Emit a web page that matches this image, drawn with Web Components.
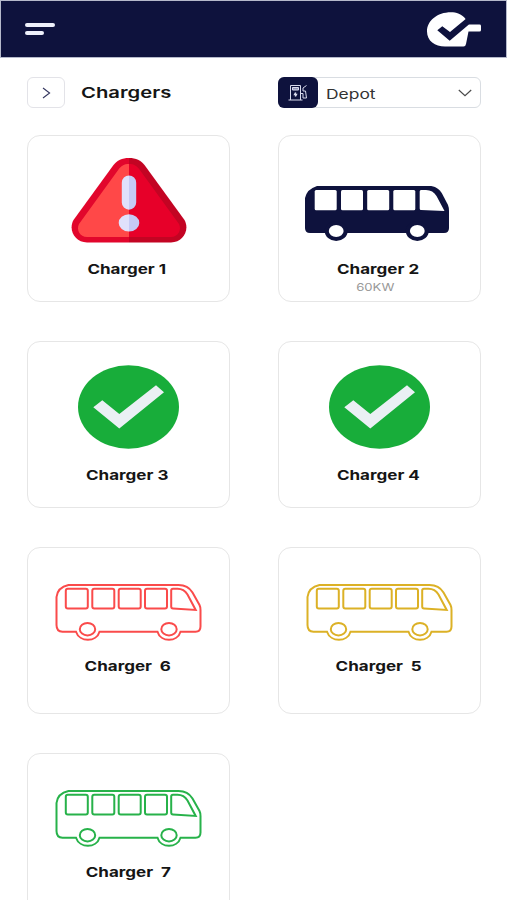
<!DOCTYPE html>
<html lang="en">
<head>
<meta charset="utf-8">
<meta name="viewport" content="width=device-width, initial-scale=1">
<title>Chargers</title>
<style>
  html, body {
    margin: 0;
    height: 900px;
    overflow: hidden;
    background: #fff;
    font-family: Inter, "Open Sans", sans-serif;
    color: #151515;
  }
</style>
</head>
<body>
<charger-page>
  <app-header slot="header"></app-header>
  <page-toolbar slot="toolbar">
    Chargers
    <depot-select slot="filter">Depot</depot-select>
  </page-toolbar>
  <charger-card><warning-icon slot="icon"></warning-icon>Charger 1</charger-card>
  <charger-card><bus-icon slot="icon" solid></bus-icon>Charger 2<span slot="power">60KW</span></charger-card>
  <charger-card><check-icon slot="icon"></check-icon>Charger 3</charger-card>
  <charger-card><check-icon slot="icon"></check-icon>Charger 4</charger-card>
  <charger-card compact><bus-icon slot="icon" style="color: #fa4b4b"></bus-icon>Charger 6</charger-card>
  <charger-card compact><bus-icon slot="icon" style="color: #dcb126"></bus-icon>Charger 5</charger-card>
  <charger-card compact><bus-icon slot="icon" style="color: #27b24a"></bus-icon>Charger 7</charger-card>
</charger-page>

<script>
class ChargerPage extends HTMLElement {
  constructor() {
    super()
    this.attachShadow({ mode: 'open' })
    this.shadowRoot.innerHTML = `
      <style>
        :host {
          display: block;
        }
        .grid {
          display: grid;
          grid-template-columns: 203px 203px;
          grid-auto-rows: 167px;
          gap: 39px 48px;
          padding: 27px 26px 0 27px;
        }
      </style>
      <slot name="header"></slot>
      <slot name="toolbar"></slot>
      <main class="grid"><slot></slot></main>
    `
  }
}

class AppHeader extends HTMLElement {
  constructor() {
    super()
    this.attachShadow({ mode: 'open' })
    this.shadowRoot.innerHTML = `
      <style>
        :host {
          display: flex;
          justify-content: space-between;
          align-items: center;
          box-sizing: border-box;
          height: 58px;
          padding: 0 25px 0 24px;
          background: #0e123d;
          border: 1px solid #b5b9cb;
        }
        .menu {
          display: flex;
          flex-direction: column;
          gap: 4.5px;
        }
        .menu i {
          width: 30px;
          height: 4px;
          border-radius: 2px;
          background: #eef0fb;
        }
        .menu i:last-child {
          width: 19px;
        }
        svg {
          display: block;
        }
      </style>
      <div class="menu"><i></i><i></i></div>
      <svg width="54" height="35" viewBox="0 0 54 35">
        <path fill="#fff" d="M39 7.5C35 2 29 .3 24 .3 10 .3 0 9 0 19.5 0 29 8 34.5 18 34.5H36.5Q38.5 34.5 39 32L41.5 19.5H52.5Q54 19.5 54 18V14Q54 12.6 52.5 12.6H41.5Z"/>
        <path fill="#0e123d" d="M10.3 18.3L15.3 14.3 23 20 39 6.8 45 9 41.3 13 22.7 28.7Z"/>
      </svg>
    `
  }
}

class PageToolbar extends HTMLElement {
  constructor() {
    super()
    this.attachShadow({ mode: 'open' })
    this.shadowRoot.innerHTML = `
      <style>
        :host {
          display: flex;
          align-items: center;
          height: 31px;
          padding: 19px 26px 0 27px;
        }
        .toggle {
          display: flex;
          align-items: center;
          justify-content: center;
          box-sizing: border-box;
          width: 38px;
          height: 31px;
          border: 1px solid #e3e3e8;
          border-radius: 6px;
        }
        h1 {
          margin: 0 0 0 16px;
          flex: 1;
          font-size: 15px;
          font-weight: 600;
          line-height: 20px;
          transform: scaleX(1.35);
          transform-origin: left;
        }
      </style>
      <div class="toggle">
        <svg width="9" height="12" viewBox="0 0 9 12" fill="none" stroke="#34365f" stroke-width="1.1"><path d="M1 1L7.6 6 1 11"/></svg>
      </div>
      <h1><slot></slot></h1>
      <slot name="filter"></slot>
    `
  }
}

class DepotSelect extends HTMLElement {
  constructor() {
    super()
    this.attachShadow({ mode: 'open' })
    this.shadowRoot.innerHTML = `
      <style>
        :host {
          display: flex;
          align-items: center;
          box-sizing: border-box;
          width: 203px;
          height: 31px;
          padding-right: 8px;
          border: 1px solid #d9dde2;
          border-radius: 6px;
          color: #333;
        }
        .tile {
          display: flex;
          align-items: center;
          justify-content: center;
          width: 40px;
          height: 31px;
          margin: -1px 8px -1px -1px;
          border-radius: 6px;
          background: #0e123d;
        }
        .value {
          flex: 1;
          font-size: 13.5px;
          line-height: 20px;
          transform: translateY(.5px) scaleX(1.29);
          transform-origin: left;
        }
      </style>
      <div class="tile">
        <svg width="20" height="17" viewBox="0 0 20 17" fill="none" stroke="#d9dbed" stroke-width="1">
          <path d="M.5 16H14.5M2.5 16V1.5H12.500V16"/>
          <path fill="#8e91b3" d="M4.500 3.500H10.500V6H4.500Z"/>
          <path stroke-width="1.6" d="M7.700 8.500L6.700 10.500H8.300L7.300 12.500"/>
          <path d="M18.500 1.500L15 4V7H17.500L18.500 14H15V9.500H12.500"/>
        </svg>
      </div>
      <span class="value"><slot></slot></span>
      <svg width="14" height="8" viewBox="0 0 14 8" fill="none" stroke="#4a4a4a" stroke-width="1.2"><path d="M.8 1L7 6.600 13.200 1"/></svg>
    `
  }
}

class ChargerCard extends HTMLElement {
  constructor() {
    super()
    this.attachShadow({ mode: 'open' })
    this.shadowRoot.innerHTML = `
      <style>
        :host {
          display: flex;
          flex-direction: column;
          align-items: center;
          box-sizing: border-box;
          border: 1px solid #e6e6e6;
          border-radius: 13px;
          background: #fff;
        }
        .icon {
          display: flex;
          align-items: flex-end;
          height: 107px;
        }
        .name {
          margin-top: 16px;
          font-size: 13.5px;
          font-weight: 700;
          line-height: 20px;
          transform: translateX(-1.500px) scaleX(1.26);
        }
        .power {
          margin-top: 1px;
          font-size: 10.5px;
          line-height: 16px;
          color: #999;
          transform: translateX(-4px) scaleX(1.25);
        }
        :host([compact]) .icon {
          height: 93px;
        }
        :host([compact]) .name {
          margin-top: 15px;
          word-spacing: 3px;
          transform: translateX(-.5px) scaleX(1.26);
        }
      </style>
      <div class="icon"><slot name="icon"></slot></div>
      <div class="name"><slot></slot></div>
      <div class="power"><slot name="power"></slot></div>
    `
  }
}

class WarningIcon extends HTMLElement {
  constructor() {
    super()
    this.attachShadow({ mode: 'open' })
    this.shadowRoot.innerHTML = `
      <style>
        :host, svg {
          display: block;
        }
      </style>
      <svg width="116" height="85" viewBox="0 0 116 85">
        <path fill="#e2062c" d="M58 0C51 0 46 2.5 42.5 7L2.5 62C-3 72 4 84.5 16 84.5H58Z"/>
        <path fill="#c30423" d="M58 0C65 0 70 2.5 73.5 7L113.5 62C119 72 112 84.5 100 84.5H58Z"/>
        <path fill="#ff4848" d="M58 6C53 6 50 8 47.5 11.5L8 66C5 72 9 79 16 79H58Z"/>
        <path fill="#e70029" d="M58 6C63 6 66 8 68.5 11.5L108 66C111 72 107 79 100 79H58Z"/>
        <path fill="#e0e1fc" d="M58 17.5A7.2 7.2 0 0 0 50.8 24.7V44.5A7.2 7.2 0 0 0 58 51.7ZM58 56.3A10.3 8.6 0 0 0 58 73.5Z"/>
        <path fill="#c6caf6" d="M58 17.5A7.2 7.2 0 0 1 65.2 24.7V44.5A7.2 7.2 0 0 1 58 51.7ZM58 56.3A10.3 8.6 0 0 1 58 73.5Z"/>
      </svg>
    `
  }
}

class CheckIcon extends HTMLElement {
  constructor() {
    super()
    this.attachShadow({ mode: 'open' })
    this.shadowRoot.innerHTML = `
      <style>
        :host, svg {
          display: block;
        }
      </style>
      <svg width="101" height="84" viewBox="0 0 101 84">
        <ellipse cx="50.5" cy="42" rx="50.5" ry="41.8" fill="#18ad3a"/>
        <path fill="#eaf0f4" d="M15.3 42.3L24.3 35.2 41.3 49 78 20.2 86 27.2 41.3 63.6Z"/>
      </svg>
    `
  }
}

class BusIcon extends HTMLElement {
  connectedCallback() {
    if (this.shadowRoot) return
    this.attachShadow({ mode: 'open' })
    this.shadowRoot.innerHTML = `
      <style>
        :host, svg {
          display: block;
        }
        :host([solid]) {
          padding-right: 6px;
        }
      </style>
      ${this.hasAttribute('solid') ? this.solid() : this.outline()}
    `
  }

  solid() {
    return `
      <svg width="144" height="57" viewBox="0 0 144 57">
        <g fill="#0e123d">
          <path d="M12 0H124C130 0 134 2.5 137 7.5L143 19Q144 21.5 144 25V42Q144 47 139 47H5Q0 47 0 42V12Q2 3 12 0Z"/>
          <ellipse cx="31.2" cy="45" rx="11.5" ry="10"/>
          <ellipse cx="112.3" cy="45" rx="11.5" ry="10"/>
        </g>
        <g fill="#fff">
          <rect x="9.7" y="4" width="22" height="20.3" rx="1.5"/>
          <rect x="36" y="4" width="22" height="20.3" rx="1.5"/>
          <rect x="62.2" y="4" width="22" height="20.3" rx="1.5"/>
          <rect x="88.3" y="4" width="22" height="20.3" rx="1.5"/>
          <path d="M116 4H121Q128 4 131.5 10L139.5 25 116 24Q114.7 24 114.7 22.5V5.5Q114.7 4 116 4Z"/>
          <ellipse cx="31.2" cy="45" rx="7.4" ry="6.1"/>
          <ellipse cx="112.3" cy="45" rx="7.4" ry="6.1"/>
        </g>
      </svg>
    `
  }

  outline() {
    return `
      <svg width="147" height="57" viewBox="-.5 0 147 57" fill="none" stroke="currentColor" stroke-width="2">
        <path d="M13 1H123C130 1 134 3.5 137 8.5L144 21Q145 23 145 26V42.5Q145 47.7 140 47.7H125C122 58.5 105 58.5 102 47.7H44C41 58.5 24 58.5 20.5 47.7H7Q1 47.7 1 41V13Q2 3.500 13 1Z"/>
        <rect x="10.3" y="4.7" width="22" height="19.8" rx="2"/>
        <rect x="36.8" y="4.7" width="22" height="19.8" rx="2"/>
        <rect x="63.2" y="4.7" width="22" height="19.8" rx="2"/>
        <rect x="89.5" y="4.7" width="22" height="19.8" rx="2"/>
        <path d="M117.5 4.7H122Q128.5 4.7 132 10.5L140.2 26 117.5 24.5Q115.7 24.5 115.7 22.5V6.5Q115.7 4.7 117.5 4.7Z"/>
        <ellipse cx="32" cy="45.2" rx="7.7" ry="6.2"/>
        <ellipse cx="113.5" cy="45.2" rx="7.7" ry="6.2"/>
      </svg>
    `
  }
}

customElements.define('charger-page', ChargerPage)
customElements.define('app-header', AppHeader)
customElements.define('page-toolbar', PageToolbar)
customElements.define('depot-select', DepotSelect)
customElements.define('charger-card', ChargerCard)
customElements.define('warning-icon', WarningIcon)
customElements.define('check-icon', CheckIcon)
customElements.define('bus-icon', BusIcon)
</script>
</body>
</html>
